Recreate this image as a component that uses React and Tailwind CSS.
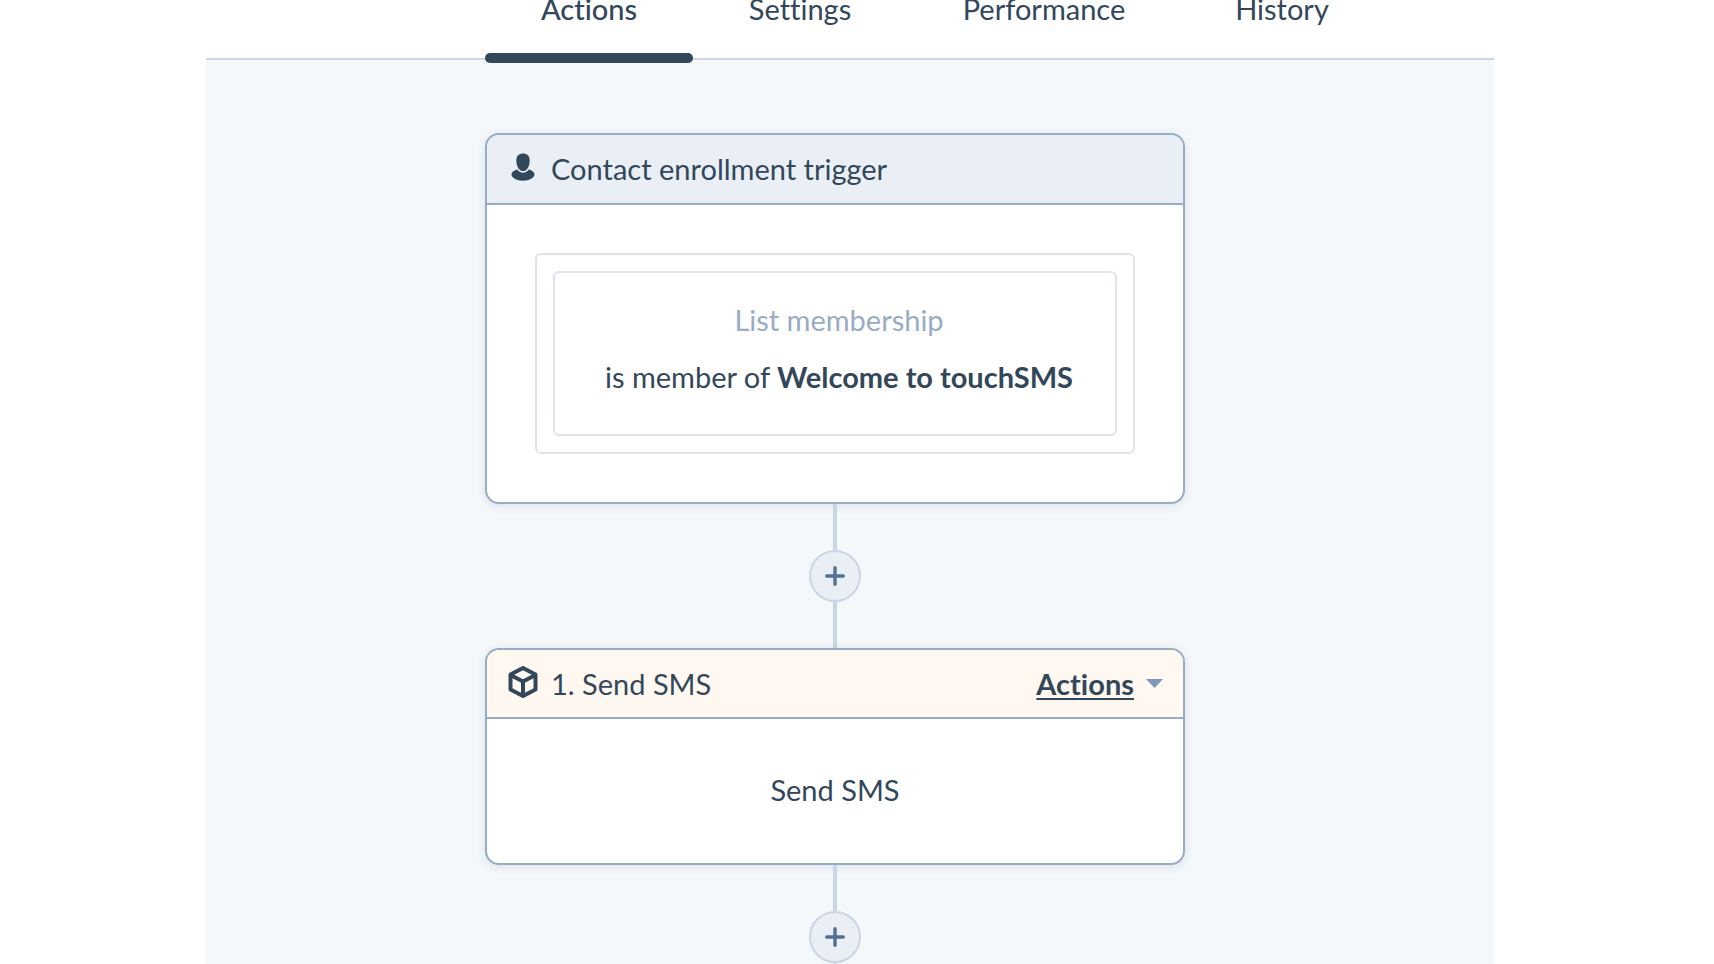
const tabs = [
  { label: 'Actions', width: 'w-[208px]', active: true },
  { label: 'Settings', width: 'w-[214px]' },
  { label: 'Performance', width: 'w-[274px]' },
  { label: 'History', width: 'w-[202px]' },
];

function Tabs() {
  return (
    <nav className="flex h-[60px] border-b-2 border-[#cbd6e4] bg-white pl-[279px]">
      {tabs.map((tab) => (
        <a
          key={tab.label}
          href="#"
          aria-current={tab.active ? 'page' : undefined}
          className={`relative flex h-[58px] shrink-0 justify-center leading-[18px] ${tab.width} ${tab.active ? 'font-medium' : ''}`}
        >
          {tab.label}
          {tab.active && (
            <span className="absolute inset-x-0 -bottom-[5px] h-[10px] rounded-[5px] bg-[#33475b]" />
          )}
        </a>
      ))}
    </nav>
  );
}

function ContactIcon() {
  return (
    <svg width="24" height="28" viewBox="0 0 24 28" fill="#33475b" aria-hidden="true">
      <path d="M12 0.500C16.100 0.500 18.700 3.200 18.700 7.400C18.700 13 16.100 18 12 18C7.900 18 5.300 13 5.300 7.400C5.300 3.200 7.900 .5 12 .5Z" />
      <path d="M6.200 16.600C7.500 18.600 9.500 19.700 12 19.700S16.500 18.600 17.800 16.600C20.500 17.300 23.500 19.200 23.500 21.500C23.500 24.500 18.700 27.700 12 27.700S.5 24.500 .5 21.500C.5 19.200 3.500 17.300 6.200 16.600Z" />
    </svg>
  );
}

function CubeIcon() {
  return (
    <svg width="30" height="32" viewBox="0 0 30 32" fill="none" stroke="#33475b" strokeWidth="4" strokeLinejoin="round" aria-hidden="true">
      <path d="M15 2L27.500 8.600V23.400L15 30L2.500 23.400V8.600Z" />
      <path d="M2.500 8.900L15 15.500L27.500 8.900M15 15.500V30" />
    </svg>
  );
}

function Card({ icon, title, headerStyle, action, children }) {
  return (
    <section className="w-[700px] overflow-hidden rounded-[14px] border-2 border-[#99acc5] bg-white shadow-[0_2px_10px_rgba(45,62,80,0.12)]">
      <header className={`flex items-center border-b-2 border-[#99acc5] px-5 ${headerStyle}`}>
        <span className="flex w-8 justify-center pb-1">{icon}</span>
        <h2 className="ml-3 grow">{title}</h2>
        {action}
      </header>
      {children}
    </section>
  );
}

function Connector() {
  return <div className="h-[46px] w-1 shrink-0 bg-[#cbd6e4]" />;
}

function AddButton() {
  return (
    <button
      type="button"
      aria-label="Add action"
      className="flex size-[52px] shrink-0 items-center justify-center rounded-full border-2 border-[#cbd6e4] bg-[#eaeff6]"
    >
      <svg width="20" height="20" viewBox="0 0 20 20" stroke="#516f94" strokeWidth="3.400" strokeLinecap="round" aria-hidden="true">
        <path d="M10 1.700V18.300M1.700 10H18.300" />
      </svg>
    </button>
  );
}

export default function App() {
  return (
    <div className="h-screen overflow-hidden bg-white font-['Lato',sans-serif] text-[29px] leading-[38px] font-normal text-[#33475b] [font-variant-ligatures:none]">
      <div className="mr-[220px] ml-[206px] flex min-h-full flex-col">
        <Tabs />
        <main className="flex grow flex-col items-center bg-[#f4f8fb] pt-[73px] pr-[30px]">
          <Card icon={<ContactIcon />} title="Contact enrollment trigger" headerStyle="h-[70px] bg-[#eaeff6]">
            <div className="p-12">
              <div className="rounded-md border-2 border-[#dfe3ed] p-4">
                <div className="flex h-[165px] flex-col items-center gap-[19px] rounded-md border-2 border-[#dfe3ed] pt-7 pl-2">
                  <p className="text-[#99acc5]">List membership</p>
                  <p>
                    is member of <strong className="font-bold">Welcome to touchSMS</strong>
                  </p>
                </div>
              </div>
            </div>
          </Card>
          <Connector />
          <AddButton />
          <Connector />
          <Card
            icon={<CubeIcon />}
            title="1. Send SMS"
            headerStyle="h-[69px] bg-[#fff8f1]"
            action={
              <button type="button" className="flex items-center gap-3 font-bold">
                <span className="underline decoration-2 underline-offset-3">Actions</span>
                <svg width="17" height="9" viewBox="0 0 17 9" fill="#7c98bb" aria-hidden="true">
                  <path d="M0 0H17L8.500 9Z" />
                </svg>
              </button>
            }
          >
            <p className="flex h-36 items-center justify-center pb-0.5">Send SMS</p>
          </Card>
          <Connector />
          <AddButton />
          <Connector />
        </main>
      </div>
    </div>
  );
}
